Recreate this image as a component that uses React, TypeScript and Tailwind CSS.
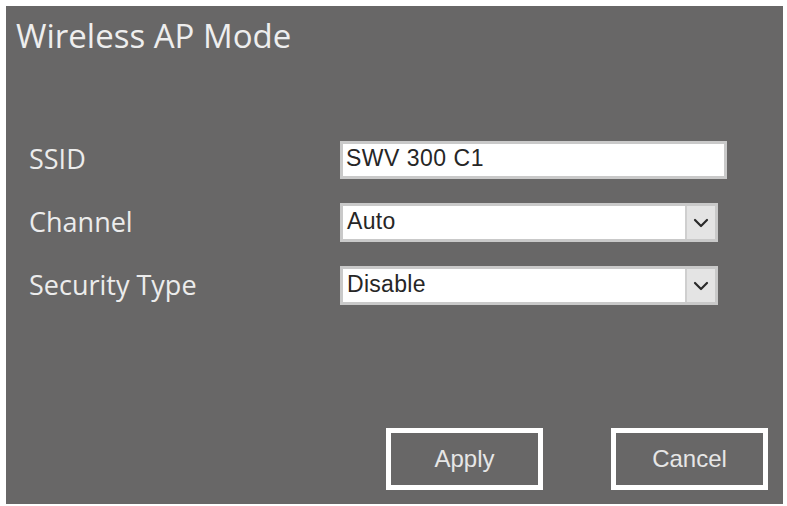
import { ChevronDown } from 'lucide-react';

const labelFont = { fontFamily: '"Open Sans", "Noto Sans", sans-serif' };

function Row({ label, children }: { label: string; children: React.ReactNode }) {
  return (
    <div className="flex items-center h-[63px]">
      <div className="w-[334px] pl-[23px] text-[27px] text-[#ececec]" style={labelFont}>
        {label}
      </div>
      {children}
    </div>
  );
}

function SelectBox({ value }: { value: string }) {
  return (
    <div className="flex items-center h-[39px] w-[378px] border-[3px] border-[#c9c9c9] bg-white">
      <span className="flex-1 pl-[4px] pb-[3px] text-[23px] tracking-[0.3px] text-[#262626] font-['Liberation_Sans',Arial,sans-serif]">
        {value}
      </span>
      <div className="w-[30px] h-[33px] flex items-center justify-center bg-[#e4e4e4] border-l-2 border-[#cfcfcf]">
        <ChevronDown className="w-[24px] h-[24px] text-[#2a2a2a]" strokeWidth={2.2} />
      </div>
    </div>
  );
}

export default function App() {
  return (
    <div className="w-[787px] h-[506px] bg-white pt-[6px] pl-[6px]">
      <div className="w-[777px] h-[498px] bg-[#686767] flex flex-col">
        <h1
          className="pl-[10px] pt-[8px] text-[33px] leading-[44px] text-[#eeeeee]"
          style={labelFont}
        >
          Wireless AP Mode
        </h1>

        <div className="mt-[70px] flex flex-col">
          <Row label="SSID">
            <div className="flex items-center h-[38px] w-[387px] border-[3px] border-[#c9c9c9] bg-white">
              <span className="pl-[3px] pb-[3px] text-[23px] tracking-[0.5px] text-[#262626] font-['Liberation_Sans',Arial,sans-serif]">
                SWV 300 C1
              </span>
            </div>
          </Row>
          <Row label="Channel">
            <SelectBox value="Auto" />
          </Row>
          <Row label="Security Type">
            <SelectBox value="Disable" />
          </Row>
        </div>

        <div className="mt-auto mb-[14px] flex justify-end gap-[68px] pr-[15px]">
          {['Apply', 'Cancel'].map((t) => (
            <button
              key={t}
              className="w-[157px] h-[62px] border-[5px] border-white text-[24px] text-[#e6e6e6] font-['Liberation_Sans',Arial,sans-serif]"
            >
              {t}
            </button>
          ))}
        </div>
      </div>
    </div>
  );
}
